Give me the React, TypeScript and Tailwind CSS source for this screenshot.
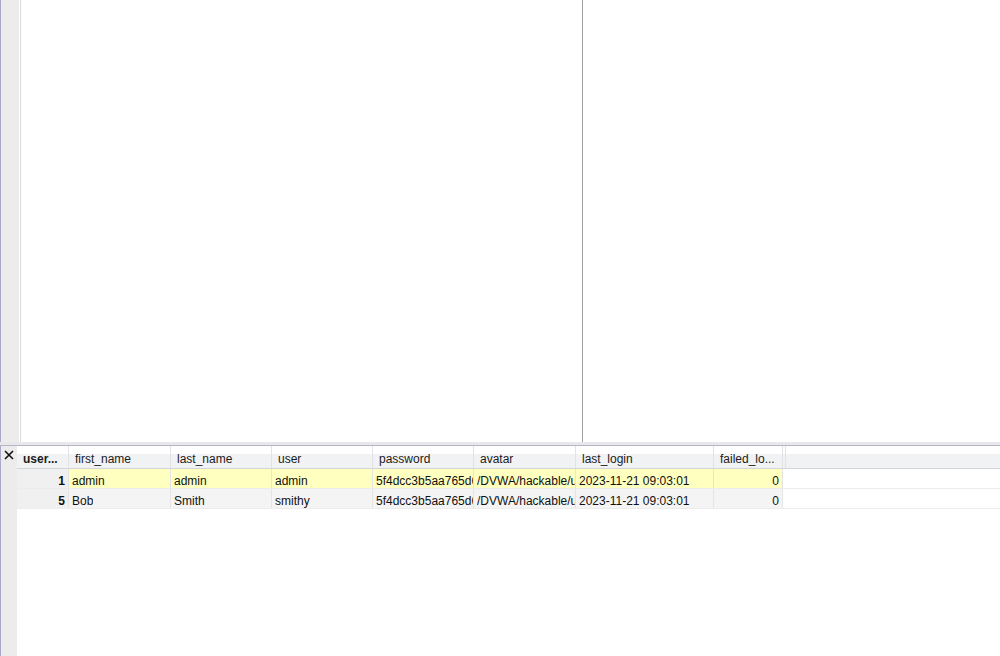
import React from "react";

type Col = { key: string; label: string; width: string; bold?: boolean; right?: boolean };

const cols: Col[] = [
  { key: "user_id", label: "user...", width: "w-[52px]", bold: true, right: true },
  { key: "first_name", label: "first_name", width: "w-[102px]" },
  { key: "last_name", label: "last_name", width: "w-[101px]" },
  { key: "user", label: "user", width: "w-[101px]" },
  { key: "password", label: "password", width: "w-[101px]" },
  { key: "avatar", label: "avatar", width: "w-[102px]" },
  { key: "last_login", label: "last_login", width: "w-[138px]" },
  { key: "failed_login", label: "failed_lo...", width: "w-[69px]", right: true },
];

const rows: Record<string, string>[] = [
  {
    user_id: "1",
    first_name: "admin",
    last_name: "admin",
    user: "admin",
    password: "5f4dcc3b5aa765d61d8327deb882cf99",
    avatar: "/DVWA/hackable/users/admin.jpg",
    last_login: "2023-11-21 09:03:01",
    failed_login: "0",
  },
  {
    user_id: "5",
    first_name: "Bob",
    last_name: "Smith",
    user: "smithy",
    password: "5f4dcc3b5aa765d61d8327deb882cf99",
    avatar: "/DVWA/hackable/users/smithy.jpg",
    last_login: "2023-11-21 09:03:01",
    failed_login: "0",
  },
];

function CloseIcon() {
  return (
    <svg width="10" height="10" viewBox="0 0 10 10" className="block">
      <path d="M1 1 L9 9 M9 1 L1 9" stroke="#111" strokeWidth="1.6" />
    </svg>
  );
}

function ResultGrid() {
  return (
    <div className="flex min-w-0 flex-1 flex-col bg-white">
      {/* header */}
      <div className="flex h-[23px] border-b border-[#d3d3da] bg-[linear-gradient(#ffffff_0px,#ffffff_8px,#f1f2f4_8px,#f1f2f4_100%)]">
        {cols.map((c) => (
          <div
            key={c.key}
            className={`${c.width} flex shrink-0 items-center overflow-hidden whitespace-nowrap border-r border-[#e2e2e6] pl-[6px] pt-[4px] text-[#1b1b1b] ${
              c.bold ? "font-bold" : ""
            }`}
          >
            {c.label}
          </div>
        ))}
        <div className="ml-[2px] flex-1 border-l border-[#e2e2e6]" />
      </div>
      {/* rows */}
      {rows.map((r, i) => (
        <div key={r.user_id} className="flex h-[20px] border-b border-[#ececec]">
          {cols.map((c, ci) => {
            const bg =
              ci === 0 ? "bg-[#f0f0f0]" : i === 0 ? "bg-[#ffffc0]" : "bg-[#f4f4f4]";
            return (
              <div
                key={c.key}
                className={`${c.width} ${bg} flex shrink-0 items-center overflow-hidden whitespace-nowrap border-r border-[#e4e4e4] pt-[4px] text-[#111] ${
                  c.right ? "justify-end pr-[3px]" : "pl-[3px]"
                } ${c.bold ? "font-bold" : ""}`}
              >
                <span className="overflow-hidden">{r[c.key]}</span>
              </div>
            );
          })}
          <div className="flex-1 bg-white" />
        </div>
      ))}
    </div>
  );
}

export default function App() {
  return (
    <div className="flex h-[656px] w-[1000px] flex-col overflow-hidden bg-white font-['Liberation_Sans',Arial,sans-serif] text-[12px]">
      {/* top editor panes */}
      <div className="flex h-[442px]">
        <div className="w-[21px] shrink-0 border-l border-[#a9a9c9] bg-[#ececec] shadow-[inset_-2px_0_0_#ffffff]">
          <div className="ml-auto h-full w-px bg-[#dcdcdc]" />
        </div>
        <div className="w-[562px] shrink-0 border-r border-[#a0a0a0] bg-white" />
        <div className="flex-1 bg-white" />
      </div>
      {/* splitter */}
      <div className="h-[4px] shrink-0 border-b border-[#b8b4c8] bg-[#e8e8ec]" />
      {/* result grid */}
      <div className="flex flex-1">
        <div className="w-[17px] shrink-0 border-l border-[#a9a9c9] bg-[#ececec] pl-[3px] pt-[4px]">
          <CloseIcon />
        </div>
        <ResultGrid />
      </div>
    </div>
  );
}
